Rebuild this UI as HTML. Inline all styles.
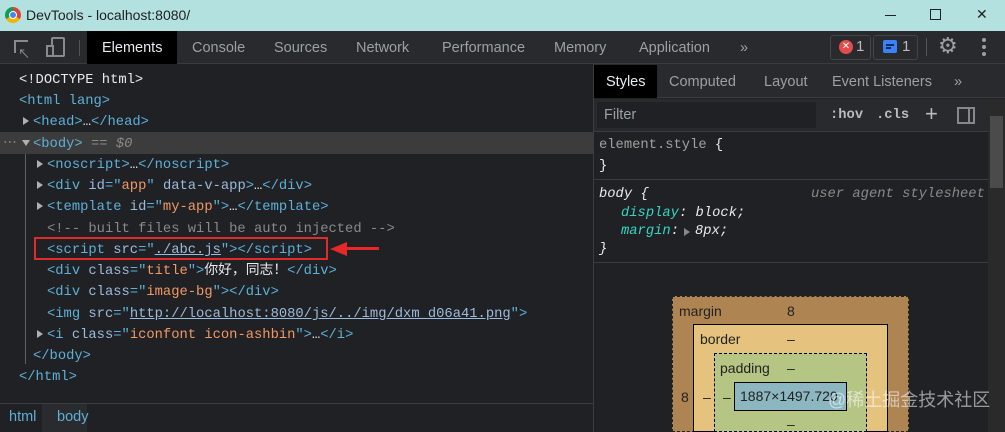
<!DOCTYPE html>
<html><head><meta charset="utf-8"><style>
*{margin:0;padding:0;box-sizing:border-box}
body{width:1005px;height:432px;overflow:hidden;background:#202124;font-family:"Liberation Sans","Noto Sans CJK SC",sans-serif;position:relative;color:#bdc6cf}
.a{position:absolute;white-space:nowrap}
.m{font-family:"Liberation Mono","Noto Sans CJK SC",monospace;font-size:13.8px;line-height:18px;padding-top:2px}
.t{color:#5db0d7}.at{color:#9bbbdc}.v{color:#f29766}.c{color:#898989}.w{color:#e8eaed}
.u{text-decoration:underline}
.tri{position:absolute;width:0;height:0;border-top:4px solid transparent;border-bottom:4px solid transparent;border-left:6px solid #b0b0b0}
.tab{position:absolute;top:31px;height:33px;line-height:35px;font-size:14.5px;color:#9aa0a6}
.st{position:absolute;top:65px;height:33px;line-height:34px;font-size:14.5px;color:#9aa0a6}
</style></head><body>
<div class="a" style="left:0;top:0;width:1005px;height:31px;background:#b2e1df"></div>
<div class="a" style="left:5px;top:7px;width:16px;height:16px;border-radius:50%;background:conic-gradient(#db4437 0 120deg,#f4b400 120deg 240deg,#0f9d58 240deg 360deg)"></div>
<div class="a" style="left:9px;top:11px;width:8px;height:8px;border-radius:50%;background:#4285f4;border:1.5px solid #fff"></div>
<div class="a" style="left:26px;top:7px;font-size:14px;color:#222">DevTools - localhost:8080/</div>
<div class="a" style="left:885px;top:15px;width:11px;height:1px;background:#222"></div>
<div class="a" style="left:930px;top:9px;width:11px;height:11px;border:1px solid #222"></div>
<div class="a" style="left:976px;top:6px;font-size:14px;color:#222">✕</div>
<div class="a" style="left:0;top:31px;width:1005px;height:33px;background:#292a2d;border-bottom:1px solid #3c3c3c"></div>
<div class="a" style="left:14px;top:40px;width:14px;height:13px;border:2px solid #8a8a8a;border-right:none;border-bottom:none"></div>
<div class="a" style="left:18px;top:45px;color:#9a9a9a;font-size:12px">↖</div>
<div class="a" style="left:51px;top:37px;width:14px;height:20px;border:2px solid #8a8a8a;border-radius:2px"></div>
<div class="a" style="left:46px;top:45px;width:8px;height:12px;border:2px solid #8a8a8a;background:#292a2d"></div>
<div class="a" style="left:79px;top:40px;width:1px;height:16px;background:#555"></div>
<div class="a" style="left:87px;top:31px;width:90px;height:33px;background:#000"></div>
<div class="tab" style="left:102px;color:#e8eaed">Elements</div>
<div class="tab" style="left:192px">Console</div>
<div class="tab" style="left:274px">Sources</div>
<div class="tab" style="left:356px">Network</div>
<div class="tab" style="left:442px">Performance</div>
<div class="tab" style="left:554px">Memory</div>
<div class="tab" style="left:639px">Application</div>
<div class="tab" style="left:740px">»</div>
<div class="a" style="left:830px;top:35px;width:41px;height:25px;border:1px solid #444;border-radius:3px"></div>
<div class="a" style="left:839px;top:40px;width:14px;height:14px;border-radius:50%;background:#e24c4c;color:#fff;font-size:10px;line-height:14px;text-align:center">✕</div>
<div class="a" style="left:856px;top:38px;font-size:15px;color:#bbb">1</div>
<div class="a" style="left:873px;top:35px;width:45px;height:25px;border:1px solid #444;border-radius:3px"></div>
<div class="a" style="left:883px;top:40px;width:14px;height:13px;background:#3b82f6;border-radius:2px"></div>
<div class="a" style="left:886px;top:44px;width:8px;height:1.5px;background:#0b2a6a"></div>
<div class="a" style="left:886px;top:47px;width:5px;height:1.5px;background:#0b2a6a"></div>
<div class="a" style="left:902px;top:38px;font-size:15px;color:#bbb">1</div>
<div class="a" style="left:926px;top:38px;width:1px;height:18px;background:#555"></div>
<div class="a" style="left:938px;top:33px;font-size:22px;color:#9aa0a6">⚙</div>
<div class="a" style="left:982px;top:38px;width:4px;height:4px;border-radius:50%;background:#9aa0a6;box-shadow:0 7px 0 #9aa0a6,0 14px 0 #9aa0a6"></div>
<div class="a" style="left:0;top:132px;width:593px;height:22px;background:#3c3c3c"></div>
<div class="a" style="left:25px;top:154px;width:1px;height:210px;background:#606060"></div>
<div class="a m w" style="left:19px;top:70px">&lt;!DOCTYPE html&gt;</div>
<div class="a m t" style="left:19px;top:91px">&lt;html lang&gt;</div>
<div class="tri" style="left:23px;top:117px"></div>
<div class="a m t" style="left:33px;top:112px">&lt;head&gt;<span class="w">…</span>&lt;/head&gt;</div>
<div class="a m c" style="left:3px;top:134px">⋯</div>
<div class="a" style="left:22px;top:140px;border-left:4px solid transparent;border-right:4px solid transparent;border-top:6px solid #b0b0b0"></div>
<div class="a m t" style="left:33px;top:134px">&lt;body&gt; <span class="c"><i>== $0</i></span></div>
<div class="tri" style="left:37px;top:160px"></div>
<div class="a m t" style="left:47px;top:155px">&lt;noscript&gt;<span class="w">…</span>&lt;/noscript&gt;</div>
<div class="tri" style="left:37px;top:181px"></div>
<div class="a m t" style="left:47px;top:176px">&lt;div <span class="at">id</span>="<span class="v">app</span>" <span class="at">data-v-app</span>&gt;<span class="w">…</span>&lt;/div&gt;</div>
<div class="tri" style="left:37px;top:202px"></div>
<div class="a m t" style="left:47px;top:197px">&lt;template <span class="at">id</span>="<span class="v">my-app</span>"&gt;<span class="w">…</span>&lt;/template&gt;</div>
<div class="a m c" style="left:47px;top:219px">&lt;!-- built files will be auto injected --&gt;</div>
<div class="a m t" style="left:47px;top:240px">&lt;script <span class="at">src</span>="<span class="at u">./abc.js</span>"&gt;&lt;/script&gt;</div>
<div class="a" style="left:34px;top:237px;width:294px;height:23px;border:2px solid #e02b2b"></div>
<div class="a" style="left:345px;top:247px;width:34px;height:3px;background:#e62828"></div>
<div class="a" style="left:330px;top:242px;border-top:7px solid transparent;border-bottom:7px solid transparent;border-right:17px solid #e62828"></div>
<div class="a m t" style="left:47px;top:261px">&lt;div <span class="at">class</span>="<span class="v">title</span>"&gt;<span class="w">你好，同志！</span>&lt;/div&gt;</div>
<div class="a m t" style="left:47px;top:282px">&lt;div <span class="at">class</span>="<span class="v">image-bg</span>"&gt;&lt;/div&gt;</div>
<div class="a m t" style="left:47px;top:304px">&lt;img <span class="at">src</span>="<span class="at u">http://localhost:8080/js/../img/dxm_d06a41.png</span>"&gt;</div>
<div class="tri" style="left:37px;top:330px"></div>
<div class="a m t" style="left:47px;top:325px">&lt;i <span class="at">class</span>="<span class="v">iconfont icon-ashbin</span>"&gt;<span class="w">…</span>&lt;/i&gt;</div>
<div class="a m t" style="left:33px;top:346px">&lt;/body&gt;</div>
<div class="a m t" style="left:19px;top:367px">&lt;/html&gt;</div>
<div class="a" style="left:0;top:403px;width:593px;height:1px;background:#3c3c3c"></div>
<div class="a" style="left:42px;top:404px;width:45px;height:28px;background:#2a2b2e"></div>
<div class="a t" style="left:9px;top:409px;font-size:14.5px">html</div>
<div class="a t" style="left:57px;top:409px;font-size:14.5px">body</div>
<div class="a" style="left:593px;top:64px;width:1px;height:368px;background:#3c3c3c"></div>
<div class="a" style="left:594px;top:64px;width:411px;height:34px;background:#292a2d;border-bottom:1px solid #3c3c3c"></div>
<div class="a" style="left:594px;top:65px;width:63px;height:33px;background:#000"></div>
<div class="st" style="left:606px;color:#e8eaed">Styles</div>
<div class="st" style="left:669px">Computed</div>
<div class="st" style="left:764px">Layout</div>
<div class="st" style="left:832px">Event Listeners</div>
<div class="st" style="left:954px">»</div>
<div class="a" style="left:594px;top:99px;width:394px;height:33px;background:#292a2d;border-bottom:1px solid #3c3c3c"></div>
<div class="a" style="left:597px;top:102px;width:219px;height:26px;background:#202124"></div>
<div class="a" style="left:604px;top:107px;font-size:14.5px;color:#9aa0a6">Filter</div>
<div class="a m" style="left:830px;top:105px;font-weight:bold;color:#bbb">:hov</div>
<div class="a m" style="left:876px;top:105px;font-weight:bold;color:#bbb">.cls</div>
<div class="a" style="left:925px;top:101px;font-size:22px;color:#bbb">+</div>
<div class="a" style="left:957px;top:107px;width:18px;height:17px;border:2px solid #888"></div>
<div class="a" style="left:968px;top:107px;width:2px;height:17px;background:#888"></div>
<div class="a" style="left:988px;top:99px;width:17px;height:333px;background:#2a2a2a"></div>
<div class="a" style="left:990px;top:116px;width:13px;height:72px;background:#4b4b4b"></div>
<div class="a m" style="left:599px;top:135px;color:#a0a0a0">element.style <span class="w">{</span></div>
<div class="a m w" style="left:599px;top:156px">}</div>
<div class="a" style="left:594px;top:179px;width:394px;height:1px;background:#3c3c3c"></div>
<div class="a m w" style="left:599px;top:184px"><i>body {</i></div>
<div class="a m c" style="left:811px;top:184px"><i>user agent stylesheet</i></div>
<div class="a m" style="left:621px;top:203px"><i><span style="color:#35d4c7">display</span><span class="w">: block;</span></i></div>
<div class="a m" style="left:621px;top:221px"><i><span style="color:#35d4c7">margin</span><span class="w">:</span></i></div>
<div class="tri" style="left:684px;top:228px;border-left-color:#888"></div>
<div class="a m w" style="left:695px;top:221px"><i>8px;</i></div>
<div class="a m w" style="left:599px;top:239px"><i>}</i></div>
<div class="a" style="left:594px;top:262px;width:394px;height:1px;background:#3c3c3c"></div>
<div class="a" style="left:672px;top:296px;width:237px;height:136px;background:#ae8453;border:1px dashed #222"></div>
<div class="a" style="left:679px;top:303px;font-size:14px;color:#222">margin</div>
<div class="a" style="left:787px;top:303px;font-size:14px;color:#222">8</div>
<div class="a" style="left:693px;top:324px;width:195px;height:108px;background:#e5c37f;border:1px solid #000"></div>
<div class="a" style="left:700px;top:331px;font-size:14px;color:#222">border</div>
<div class="a" style="left:787px;top:331px;font-size:14px;color:#222">–</div>
<div class="a" style="left:714px;top:353px;width:153px;height:79px;background:#b5c583;border:1px dashed #000"></div>
<div class="a" style="left:720px;top:360px;font-size:14px;color:#222">padding</div>
<div class="a" style="left:787px;top:360px;font-size:14px;color:#222">–</div>
<div class="a" style="left:734px;top:382px;width:113px;height:29px;background:#8cb6c0;border:1px solid #000"></div>
<div class="a" style="left:740px;top:388px;font-size:14px;color:#222">1887×1497.720</div>
<div class="a" style="left:681px;top:389px;font-size:14px;color:#222">8</div>
<div class="a" style="left:703px;top:389px;font-size:14px;color:#222">–</div>
<div class="a" style="left:723px;top:389px;font-size:14px;color:#222">–</div>
<div class="a" style="left:787px;top:416px;font-size:14px;color:#222">–</div>
<div class="a" style="left:828px;top:386px;font-size:18px;color:rgba(255,255,255,0.55)">@稀土掘金技术社区</div>
</body></html>
